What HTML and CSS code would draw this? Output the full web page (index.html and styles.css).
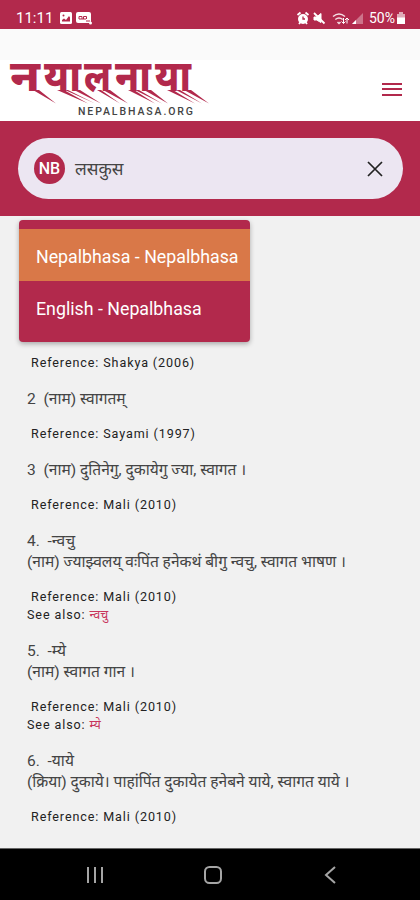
FILE: index.html
```
<!DOCTYPE html>
<html lang="new">
<head>
    <meta charset="UTF-8">
    <meta name="viewport" content="width=device-width, initial-scale=1.0">
    <title>Nepalbhasa Dictionary</title>
    <link rel="stylesheet" href="styles.css">
</head>
<body>
    <div class="status-bar">
        <span class="time">11:11</span>
        <svg class="notifications" width="34" height="14" viewBox="0 0 34 14">
            <rect x="1" y="1" width="12" height="12" rx="1.5" fill="#fff"/>
            <path d="M3 10.5V9l2-1.5L7 9l3-4 1 1.5v4z" fill="#b2294c"/>
            <circle cx="4.5" cy="4.5" r="1" fill="#b2294c"/>
            <rect x="17" y="1" width="15" height="11" rx="2" fill="#fff"/>
            <path d="M20 8V5.500h3V8M24.500 8V5.500h3V8M20 8h7M27 10h4" fill="none" stroke="#b2294c"/>
            <circle cx="31.500" cy="12" r="1.500" fill="#fff"/>
        </svg>
        <svg class="signals" width="70" height="16" viewBox="0 0 70 16">
            <g fill="none" stroke="#fff">
                <circle cx="7" cy="9" r="4" fill="#fff" stroke-width="2"/>
                <path d="M1.500 5l3-2.500M12.500 5l-3-2.500M3 14l1.500-2M11 14l-1.500-2" stroke-width="1.800"/>
                <path d="M7 6.500V9h2" stroke="#b2294c" stroke-width="1.300"/>
                <path d="M18 7h2.500L25 3.500v9L20.500 10H18z" fill="#fff"/>
                <path d="M18 3l10.500 10.500" stroke-width="1.800"/>
                <path d="M37 6.500q6-5 12 0M39.300 9.500q3.700-3 7.400 0M41.500 12l1.500 1.500 1.500-1.500" stroke-width="1.500" opacity=".85"/>
                <path d="M47.500 8v5.500M45.500 11.500l2 2 2-2M51 13.500V8M49 10l2-2 2 2" stroke-width="1"/>
            </g>
            <path d="M56 14L67 3v11z" fill="#fff" opacity=".35"/>
            <path d="M56 14l4-4v4z" fill="#fff"/>
        </svg>
        <span class="percent">50%</span>
        <svg class="battery" width="10" height="14" viewBox="0 0 10 14">
            <path d="M3 1h4v2h2v10H1V3h2z" fill="#fff" opacity=".6"/>
            <path d="M1 6.500h8V13H1z" fill="#fff"/>
        </svg>
    </div>

    <header class="header">
        <svg class="logo" width="206" height="60" viewBox="0 0 206 60">
            <g class="logo-name" transform="scale(1 1.22)">
                <text x="5" y="24.500" textLength="30" lengthAdjust="spacingAndGlyphs">न</text>
                <text x="39" y="24.500" textLength="37" lengthAdjust="spacingAndGlyphs">या</text>
                <text x="79" y="24.500" textLength="27" lengthAdjust="spacingAndGlyphs">ल</text>
                <text x="110" y="24.500" textLength="36" lengthAdjust="spacingAndGlyphs">ना</text>
                <text x="150" y="24.500" textLength="36" lengthAdjust="spacingAndGlyphs">या</text>
            </g>
            <!-- slanted strokes under the stems -->
            <g class="logo-tails">
                <path d="M28 29h6l17 13.500zM52 29h7l24 13.500zM60 29h3l27 13.500z"/>
                <path d="M69 29h6l21 13.500zM98 29h7l18 13.500zM92 29h4l19 13.500z"/>
                <path d="M123 29h6l21 13.500zM130 29h4l23 13.500zM139 29h7l17 13.500z"/>
                <path d="M162 29h6l22 13.500zM171 29h4l22 13.500zM179 29h7l18 13.500z"/>
            </g>
            <text class="logo-site" x="73" y="54" textLength="115">NEPALBHASA.ORG</text>
        </svg>
        <div class="menu">
            <span></span>
            <span></span>
            <span></span>
        </div>
    </header>

    <div class="search">
        <div class="search-box">
            <span class="badge">NB</span>
            <span class="query">लसकुस</span>
            <svg class="clear" width="16" height="16" viewBox="0 0 16 16">
                <path d="M1 1l14 14M15 1L1 15"/>
            </svg>
        </div>
        <div class="dropdown">
            <div class="option selected">Nepalbhasa - Nepalbhasa</div>
            <div class="option">English - Nepalbhasa</div>
        </div>
    </div>

    <main class="results">
        <div class="entry">
            <p class="ref">Reference: Shakya (2006)</p>
        </div>
        <div class="entry">
            <p class="word">2&nbsp; (नाम) स्वागतम्</p>
            <p class="ref">Reference: Sayami (1997)</p>
        </div>
        <div class="entry">
            <p class="word">3&nbsp; (नाम) दुतिनेगु, दुकायेगु ज्या, स्वागत ।</p>
            <p class="ref">Reference: Mali (2010)</p>
        </div>
        <div class="entry">
            <p class="word">4.&nbsp; -न्वचु<br>(नाम) ज्याझ्वलय् वःपिंत हनेकथं बीगु न्वचु, स्वागत भाषण ।</p>
            <p class="ref">Reference: Mali (2010)</p>
            <p class="see">See also: <a>न्वचु</a></p>
        </div>
        <div class="entry">
            <p class="word">5.&nbsp; -म्ये<br>(नाम) स्वागत गान ।</p>
            <p class="ref">Reference: Mali (2010)</p>
            <p class="see">See also: <a>म्ये</a></p>
        </div>
        <div class="entry">
            <p class="word">6.&nbsp; -याये<br>(क्रिया) दुकाये। पाहांपिंत दुकायेत हनेबने याये, स्वागत याये ।</p>
            <p class="ref">Reference: Mali (2010)</p>
        </div>
    </main>

    <nav class="nav-bar">
        <svg width="18" height="18" viewBox="0 0 18 18">
            <path d="M2 1v16M9 1v16M16 1v16"/>
        </svg>
        <svg width="18" height="18" viewBox="0 0 18 18">
            <rect x="1" y="1" width="16" height="16" rx="4.500"/>
        </svg>
        <svg width="18" height="18" viewBox="0 0 18 18">
            <path d="M13 1L4 9l9 8"/>
        </svg>
    </nav>
</body>
</html>
```
FILE: styles.css
```
body {
    font-family: Roboto, "Noto Sans", sans-serif;
    background-color: #f1f1f1;
    color: #444;
    display: flex;
    flex-direction: column;
    height: 900px;
    margin: 0;
    overflow: hidden;
}
p {
    margin: 0;
}
.status-bar {
    display: flex;
    align-items: center;
    box-sizing: border-box;
    height: 29px;
    padding: 7px 14px 0 16px;
    background: #b2294c;
    color: #fff;
    font-size: 15px;
}
.time {
    width: 43px;
}
.signals {
    margin-left: auto;
    margin-right: 3px;
}
.percent {
    font-size: 14px;
    margin-right: 1px;
}
.header {
    display: flex;
    justify-content: space-between;
    align-items: center;
    box-sizing: border-box;
    height: 92px;
    padding: 31px 18px 0 5px;
    background: linear-gradient(#fafafa 31px, #fff 31px);
}
.logo {
    overflow: visible;
}
.logo-name {
    font-size: 35px;
    font-weight: 800;
    fill: #b2294c;
}
.logo-tails {
    fill: #b2294c;
}
.logo-site {
    font-size: 10.5px;
    font-weight: 500;
    fill: #444;
}
.menu {
    display: flex;
    flex-direction: column;
    gap: 3.5px;
    width: 20px;
    margin-bottom: 3px;
}
.menu span {
    height: 2px;
    background: #b2294c;
}
.search {
    position: relative;
    box-sizing: border-box;
    height: 95px;
    padding: 17px 17px 17px 18px;
    background: #b2294c;
}
.search-box {
    display: flex;
    align-items: center;
    box-sizing: border-box;
    height: 61px;
    padding: 0 20px 0 16px;
    border-radius: 31px;
    background: #ece6f2;
}
.badge {
    width: 31px;
    height: 31px;
    border-radius: 50%;
    background: #b2294c;
    color: #fff;
    font-size: 16px;
    font-weight: 500;
    line-height: 31px;
    text-align: center;
}
.query {
    margin-left: 10px;
    font-size: 17.3px;
}
.clear {
    margin-left: auto;
    stroke: #222;
    stroke-width: 1.7px;
}
.dropdown {
    position: absolute;
    top: 99px;
    left: 19px;
    z-index: 1;
    box-sizing: border-box;
    width: 231px;
    height: 122px;
    padding-top: 9px;
    border-radius: 4px;
    background: #b2294c;
    box-shadow: 0 2px 5px rgba(0, 0, 0, 0.3);
}
.option {
    height: 52px;
    padding-left: 17px;
    color: #fff;
    font-size: 17.8px;
    line-height: 55px;
    white-space: nowrap;
}
.selected {
    background: #d97848;
}
.results {
    box-sizing: border-box;
    height: 612px;
    padding: 138px 20px 0 27px;
    overflow: hidden;
}
.entry {
    margin-bottom: 17px;
}
.word {
    margin-bottom: 15px;
    font-size: 15.55px;
    line-height: 21px;
    white-space: nowrap;
}
.ref, .see {
    color: #222;
    font-size: 12.55px;
    line-height: 18px;
    letter-spacing: 0.9px;
}
.ref {
    padding-left: 4px;
}
.see a {
    color: #c8365c;
    letter-spacing: 0;
}
.nav-bar {
    display: flex;
    justify-content: space-between;
    align-items: center;
    box-sizing: border-box;
    height: 52px;
    margin-top: auto;
    padding: 0 80px 0 86px;
    border-top: 1px solid #666;
    background: #000;
}
.nav-bar svg {
    fill: none;
    stroke: #a5a5a5;
    stroke-width: 2px;
}
```
